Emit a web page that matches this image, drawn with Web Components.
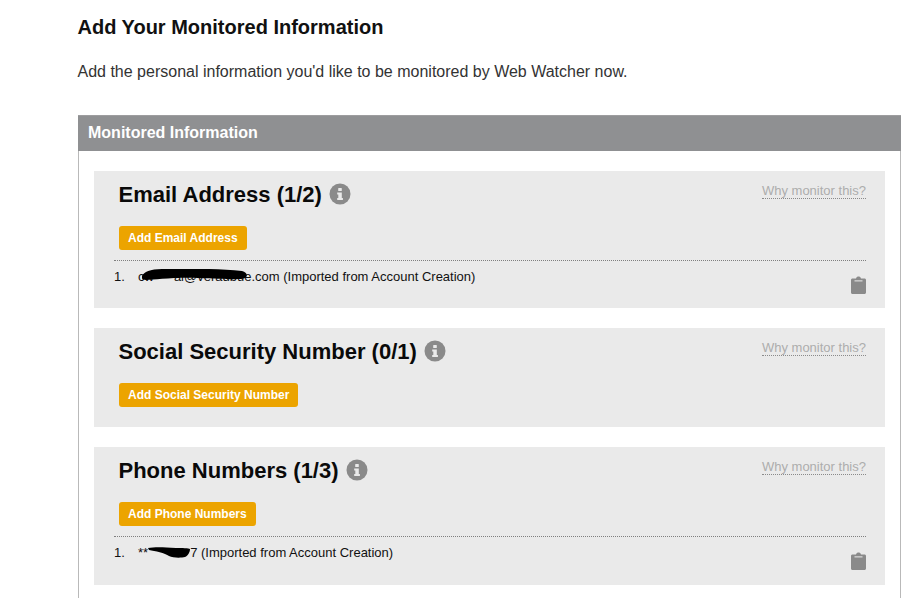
<!DOCTYPE html>
<html lang="en"><head><meta charset="utf-8"><title>Web Watcher</title>
<style>
html,body{margin:0;height:598px;overflow:hidden;background:#fff;font-family:"Liberation Sans",Arial,sans-serif}
.gap{display:inline-block}
</style></head><body>
<template id="t-page"><style>
:host{display:block;padding:16px 16px 0 78px;color:#333;box-sizing:border-box;height:598px}
h1{margin:0 0 0 -.5px;font-size:20px;line-height:22px;font-weight:700;color:#111}
p{margin:24px 0 0 -.5px;font-size:16px;line-height:20px;color:#333}
.slot{display:block;margin-top:33px}
</style><h1><slot name="title"></slot></h1><p><slot name="lead"></slot></p><div class="slot"><slot></slot></div></template>

<template id="t-panel"><style>
:host{display:block;border:1px solid #b9b9b9;border-width:0 1px;height:483px;box-sizing:border-box}
header{background:#8f9092;border-top:1px solid #9d9d9f;height:36px;box-sizing:border-box;margin:0 -1px;padding:0 10px;color:#fff;font-weight:700;font-size:16px;line-height:34px}
.body{display:flex;flex-direction:column;gap:20px;padding:20px 15px 0}
</style><header><slot name="head"></slot></header><div class="body"><slot></slot></div></template>

<template id="t-card"><style>
:host{display:block;background:#eaeaea;padding:11px 19px 0 25px;box-sizing:border-box;position:relative}
.top{display:flex;justify-content:space-between;align-items:flex-start}
.ttl{display:flex;align-items:center;gap:7px;height:24px}
h2{margin:0 0 0 -.5px;height:24px;font-size:22px;line-height:26px;font-weight:700;color:#0a0a0a}
.why{margin-top:2px;font-size:13px;line-height:14px;color:#adadad;border-bottom:1px dotted #8a8a8a}
svg{display:block;flex:none}
.add{margin:20px 0 0}
.list{margin:10px 0 0 -5px}
</style><div class="top"><div class="ttl"><h2><slot name="title"></slot></h2>
<svg width="22" height="22" viewBox="0 0 22 22"><circle cx="11" cy="11" r="10.5" fill="#8a8a8a"/><rect x="9.2" y="5" width="3.6" height="3" rx=".6" fill="#eaeaea"/><path d="M8.2 9.4h4.6v5.6h1.1v2H8.2v-2h1.1v-3.6H8.2z" fill="#eaeaea"/></svg></div>
<span class="why">Why monitor this?</span></div>
<div class="add"><slot name="add"></slot></div><div class="list"><slot></slot></div></template>

<template id="t-btn"><style>
:host{display:inline-block;background:#eca400;color:#fff;font-weight:700;font-size:12px;line-height:24px;height:24px;padding:0 9px;border-radius:3px}
</style><slot></slot></template>

<template id="t-item"><style>
:host{display:flex;border-top:1px dotted #7f7f7f;padding-top:8px;height:47px;box-sizing:border-box;font-size:13px;line-height:16px;color:#111;position:relative}
.n{width:24px;flex:none}
.t{position:relative}
svg{position:absolute;right:0;top:15px}
</style><span class="n">1.</span><span class="t"><slot></slot><slot name="mark"></slot></span>
<svg width="15" height="18" viewBox="0 0 15 18"><path d="M1.5 2.500H5L5.600 1.200C6 .3 9 .3 9.400 1.200L10 2.500h3.500c.8 0 1.500.6 1.500 1.400v12.600c0 .8-.7 1.500-1.500 1.500h-12C.7 18 0 17.300 0 16.500V3.900C0 3.100.7 2.500 1.500 2.500z" fill="#8a8a8a"/><rect x="3.500" y="4.200" width="8" height="1.300" fill="#d5d5d5"/></svg></template>

<wc-page>
<span slot="title">Add Your Monitored Information</span>
<span slot="lead">Add the personal information you'd like to be monitored by Web Watcher now.</span>
<wc-panel>
<span slot="head">Monitored Information</span>
<wc-card style="height:137px"><span slot="title">Email Address (1/2)</span><wc-btn slot="add">Add Email Address</wc-btn>
<wc-item>cw<span class="gap" style="width:20px"></span>al@veradbue.com (Imported from Account Creation)<svg slot="mark" style="position:absolute;left:4px;top:0" width="106" height="11" viewBox="0 0 106 11"><path d="M0 7C2 3 8 0 20 0c30-1 58 0 80 2 5 1 6 5 3 7-3 2-20 1-47 0C32 8 12 11 4 11 0 11-1 9 0 7z" fill="#000"/></svg></wc-item></wc-card>
<wc-card style="height:99px"><span slot="title">Social Security Number (0/1)</span><wc-btn slot="add">Add Social Security Number</wc-btn></wc-card>
<wc-card style="height:138px"><span slot="title">Phone Numbers (1/3)</span><wc-btn slot="add">Add Phone Numbers</wc-btn>
<wc-item>**<span class="gap" style="width:42px"></span>7 (Imported from Account Creation)<svg slot="mark" style="position:absolute;left:10px;top:2px" width="43" height="11" viewBox="0 0 43 11"><path d="M0 1C6 0 14 0 28 1c6 0 13 0 14 1 0 3-2 7-5 8-4 1-12 1-16-1C17 6 7 4 1 3z" fill="#000"/></svg></wc-item></wc-card>
</wc-panel>
</wc-page>
<script>
for(const [n,t] of [['wc-page','t-page'],['wc-panel','t-panel'],['wc-card','t-card'],['wc-btn','t-btn'],['wc-item','t-item']]){
customElements.define(n,class extends HTMLElement{constructor(){super();this.attachShadow({mode:'open'}).appendChild(document.getElementById(t).content.cloneNode(true))}});
}
</script>
</body></html>
